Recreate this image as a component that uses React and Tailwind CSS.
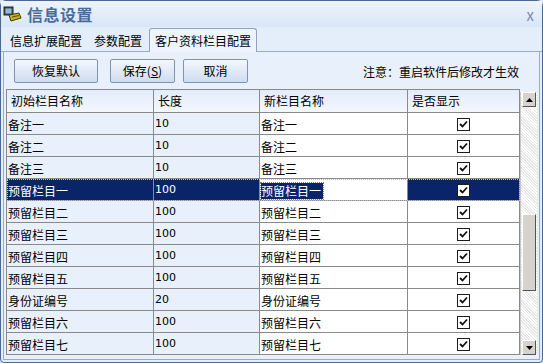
import { useState } from 'react';

const rows = [
  { name: '备注一', len: '10', alias: '备注一' },
  { name: '备注二', len: '10', alias: '备注二' },
  { name: '备注三', len: '10', alias: '备注三' },
  { name: '预留栏目一', len: '100', alias: '预留栏目一' },
  { name: '预留栏目二', len: '100', alias: '预留栏目二' },
  { name: '预留栏目三', len: '100', alias: '预留栏目三' },
  { name: '预留栏目四', len: '100', alias: '预留栏目四' },
  { name: '预留栏目五', len: '100', alias: '预留栏目五' },
  { name: '身份证编号', len: '20', alias: '身份证编号' },
  { name: '预留栏目六', len: '100', alias: '预留栏目六' },
  { name: '预留栏目七', len: '100', alias: '预留栏目七' },
];

// small win-style checkbox
const Check = () => (
  <span className="w-[13px] h-[13px] border border-[#1c1c1c] bg-white flex items-center justify-center">
    <svg width="9" height="9" viewBox="0 0 9 9">
      <path d="M1 4 L3.5 6.5 L8 1.5" stroke="#111" strokeWidth="1.8" fill="none" />
    </svg>
  </span>
);

const AppIcon = () => (
  <svg width="20" height="18" viewBox="0 0 20 18">
    <rect x="1" y="2" width="9" height="8" fill="#3b5a3c" stroke="#222" />
    <rect x="2.5" y="3.5" width="6" height="5" fill="#8fb8e8" />
    <path d="M6 10 L16 8 L18 13 L8 16 Z" fill="#c9b21a" stroke="#3a3a10" />
    <path d="M9 12 L16 10.5" stroke="#5a5010" />
  </svg>
);

const Btn = ({ children, w }) => (
  <button className={`${w} h-[24px] rounded-[2px] border border-[#7f93b5] bg-gradient-to-b from-[#f4f8fe] to-[#cfdcf0] text-[12px] text-black flex items-center justify-center`}>
    {children}
  </button>
);

export default function App() {
  const [sel] = useState(3);
  const font = { fontFamily: '"Noto Sans CJK SC", "Liberation Sans", sans-serif' };

  return (
    <div className="w-[543px] h-[363px] bg-[#d5e2f5] overflow-hidden" style={font}>
      <div className="w-full h-full border border-[#4a6796] rounded-t-[6px] rounded-b-[4px] flex flex-col bg-[#e4edfa]">
        {/* title bar */}
        <div className="h-[26px] flex items-center pl-[2px] pr-[8px] bg-gradient-to-b from-[#eef4fd] to-[#d9e6f8]">
          <AppIcon />
          <span className="ml-[4px] text-[16px] font-bold text-[#4a6b9c] tracking-[0.5px]">信息设置</span>
          <span className="ml-auto text-[15px] text-[#7d8ca6] leading-none">x</span>
        </div>

        {/* tabs */}
        <div className="h-[25px] flex items-end px-[3px] relative">
          <div className="absolute left-0 right-0 bottom-0 border-b border-[#9aabc6]" />
          <div className="h-[22px] pl-[6px] pr-[11px] flex items-center text-[12px] text-black">信息扩展配置</div>
          <div className="h-[22px] pl-[1px] pr-[7px] flex items-center text-[12px] text-black">参数配置</div>
          <div className="h-[24px] px-[5px] flex items-center text-[12px] text-black bg-[#eef4fd] border border-b-0 border-[#8ea3c4] rounded-t-[3px] relative z-10">客户资料栏目配置</div>
        </div>

        {/* panel */}
        <div className="flex-1 mx-[2px] mb-[2px] border border-t-0 border-[#9aabc6] bg-[#e8f0fb] flex flex-col">
          <div className="h-[37px] flex items-center pl-[10px] pr-[20px]">
            <Btn w="w-[84px]">恢复默认</Btn>
            <div className="w-[12px]" />
            <Btn w="w-[65px]">保存(<span className="underline">S</span>)</Btn>
            <div className="w-[8px]" />
            <Btn w="w-[65px]">取消</Btn>
            <span className="ml-auto text-[12px] text-black mt-[3px]">注意：重启软件后修改才生效</span>
          </div>

          <div className="flex ml-[2px] mr-[2px] border-l border-[#8a8a8a]">
            {/* grid */}
            <div className="w-[513px] text-[12px] text-black">
              <div className="grid grid-cols-[147px_106px_148px_112px] h-[24px] bg-gradient-to-b from-[#e3ecfa] to-[#f4f8fe] border-t border-[#8a8a8a]">
                {['初始栏目名称', '长度', '新栏目名称', '是否显示'].map((h) => (
                  <div key={h} className="border-r border-b border-[#8a8a8a] flex items-center pl-[4px] text-[12px]">{h}</div>
                ))}
              </div>
              {rows.map((r, i) => {
                const on = i === sel;
                return (
                  <div key={r.name} className={`grid grid-cols-[147px_106px_148px_112px] h-[22px] ${on ? 'outline outline-1 outline-dotted outline-[#c0c0c0] -outline-offset-1' : ''}`}>
                    <div className={`border-r border-b border-[#8a8a8a] flex items-center pl-[1px] pt-[2px] text-[12px] ${on ? 'bg-[#0a246a] text-white' : 'bg-[#e8f0fb]'}`}>{r.name}</div>
                    <div className={`border-r border-b border-[#8a8a8a] flex items-center pl-[1px] pt-[2px] text-[11px] ${on ? 'bg-[#0a246a] text-white' : 'bg-[#e8f0fb]'}`} style={{ fontFamily: '"DejaVu Sans", sans-serif' }}>{r.len}</div>
                    <div className="border-r border-b border-[#8a8a8a] flex items-center pl-[1px] pt-[2px] bg-white text-[12px]">
                      {on ? (
                        <span className="bg-[#0a246a] text-white outline outline-1 outline-dotted outline-[#808080] leading-[16px] pr-[2px]">{r.alias}</span>
                      ) : r.alias}
                    </div>
                    <div className={`border-r border-b border-[#8a8a8a] flex items-center justify-center pt-[1px] ${on ? 'bg-[#0a246a]' : 'bg-white'}`}>
                      <Check />
                    </div>
                  </div>
                );
              })}
            </div>

            {/* scrollbar */}
            <div className="w-[17px] mt-[3px] flex flex-col bg-[repeating-linear-gradient(45deg,#e6e6e6_0px,#e6e6e6_1px,#ffffff_1px,#ffffff_2px)] border-l border-[#c8c8c8]">
              <div className="h-[15px] mx-[1px] bg-[#d6d3ce] border border-t-white border-l-white border-r-[#555] border-b-[#555] flex items-center justify-center">
                <svg width="7" height="4" viewBox="0 0 7 4"><path d="M0 4 L3.5 0 L7 4 Z" fill="#000" /></svg>
              </div>
              <div className="h-[107px]" />
              <div className="h-[77px] mx-[1px] bg-[#d6d3ce] border border-t-white border-l-white border-r-[#555] border-b-[#555]" />
              <div className="flex-1" />
              <div className="h-[15px] mx-[1px] bg-[#d6d3ce] border border-t-white border-l-white border-r-[#555] border-b-[#555] flex items-center justify-center">
                <svg width="7" height="4" viewBox="0 0 7 4"><path d="M0 0 L3.5 4 L7 0 Z" fill="#000" /></svg>
              </div>
            </div>
          </div>
        </div>
      </div>
    </div>
  );
}
